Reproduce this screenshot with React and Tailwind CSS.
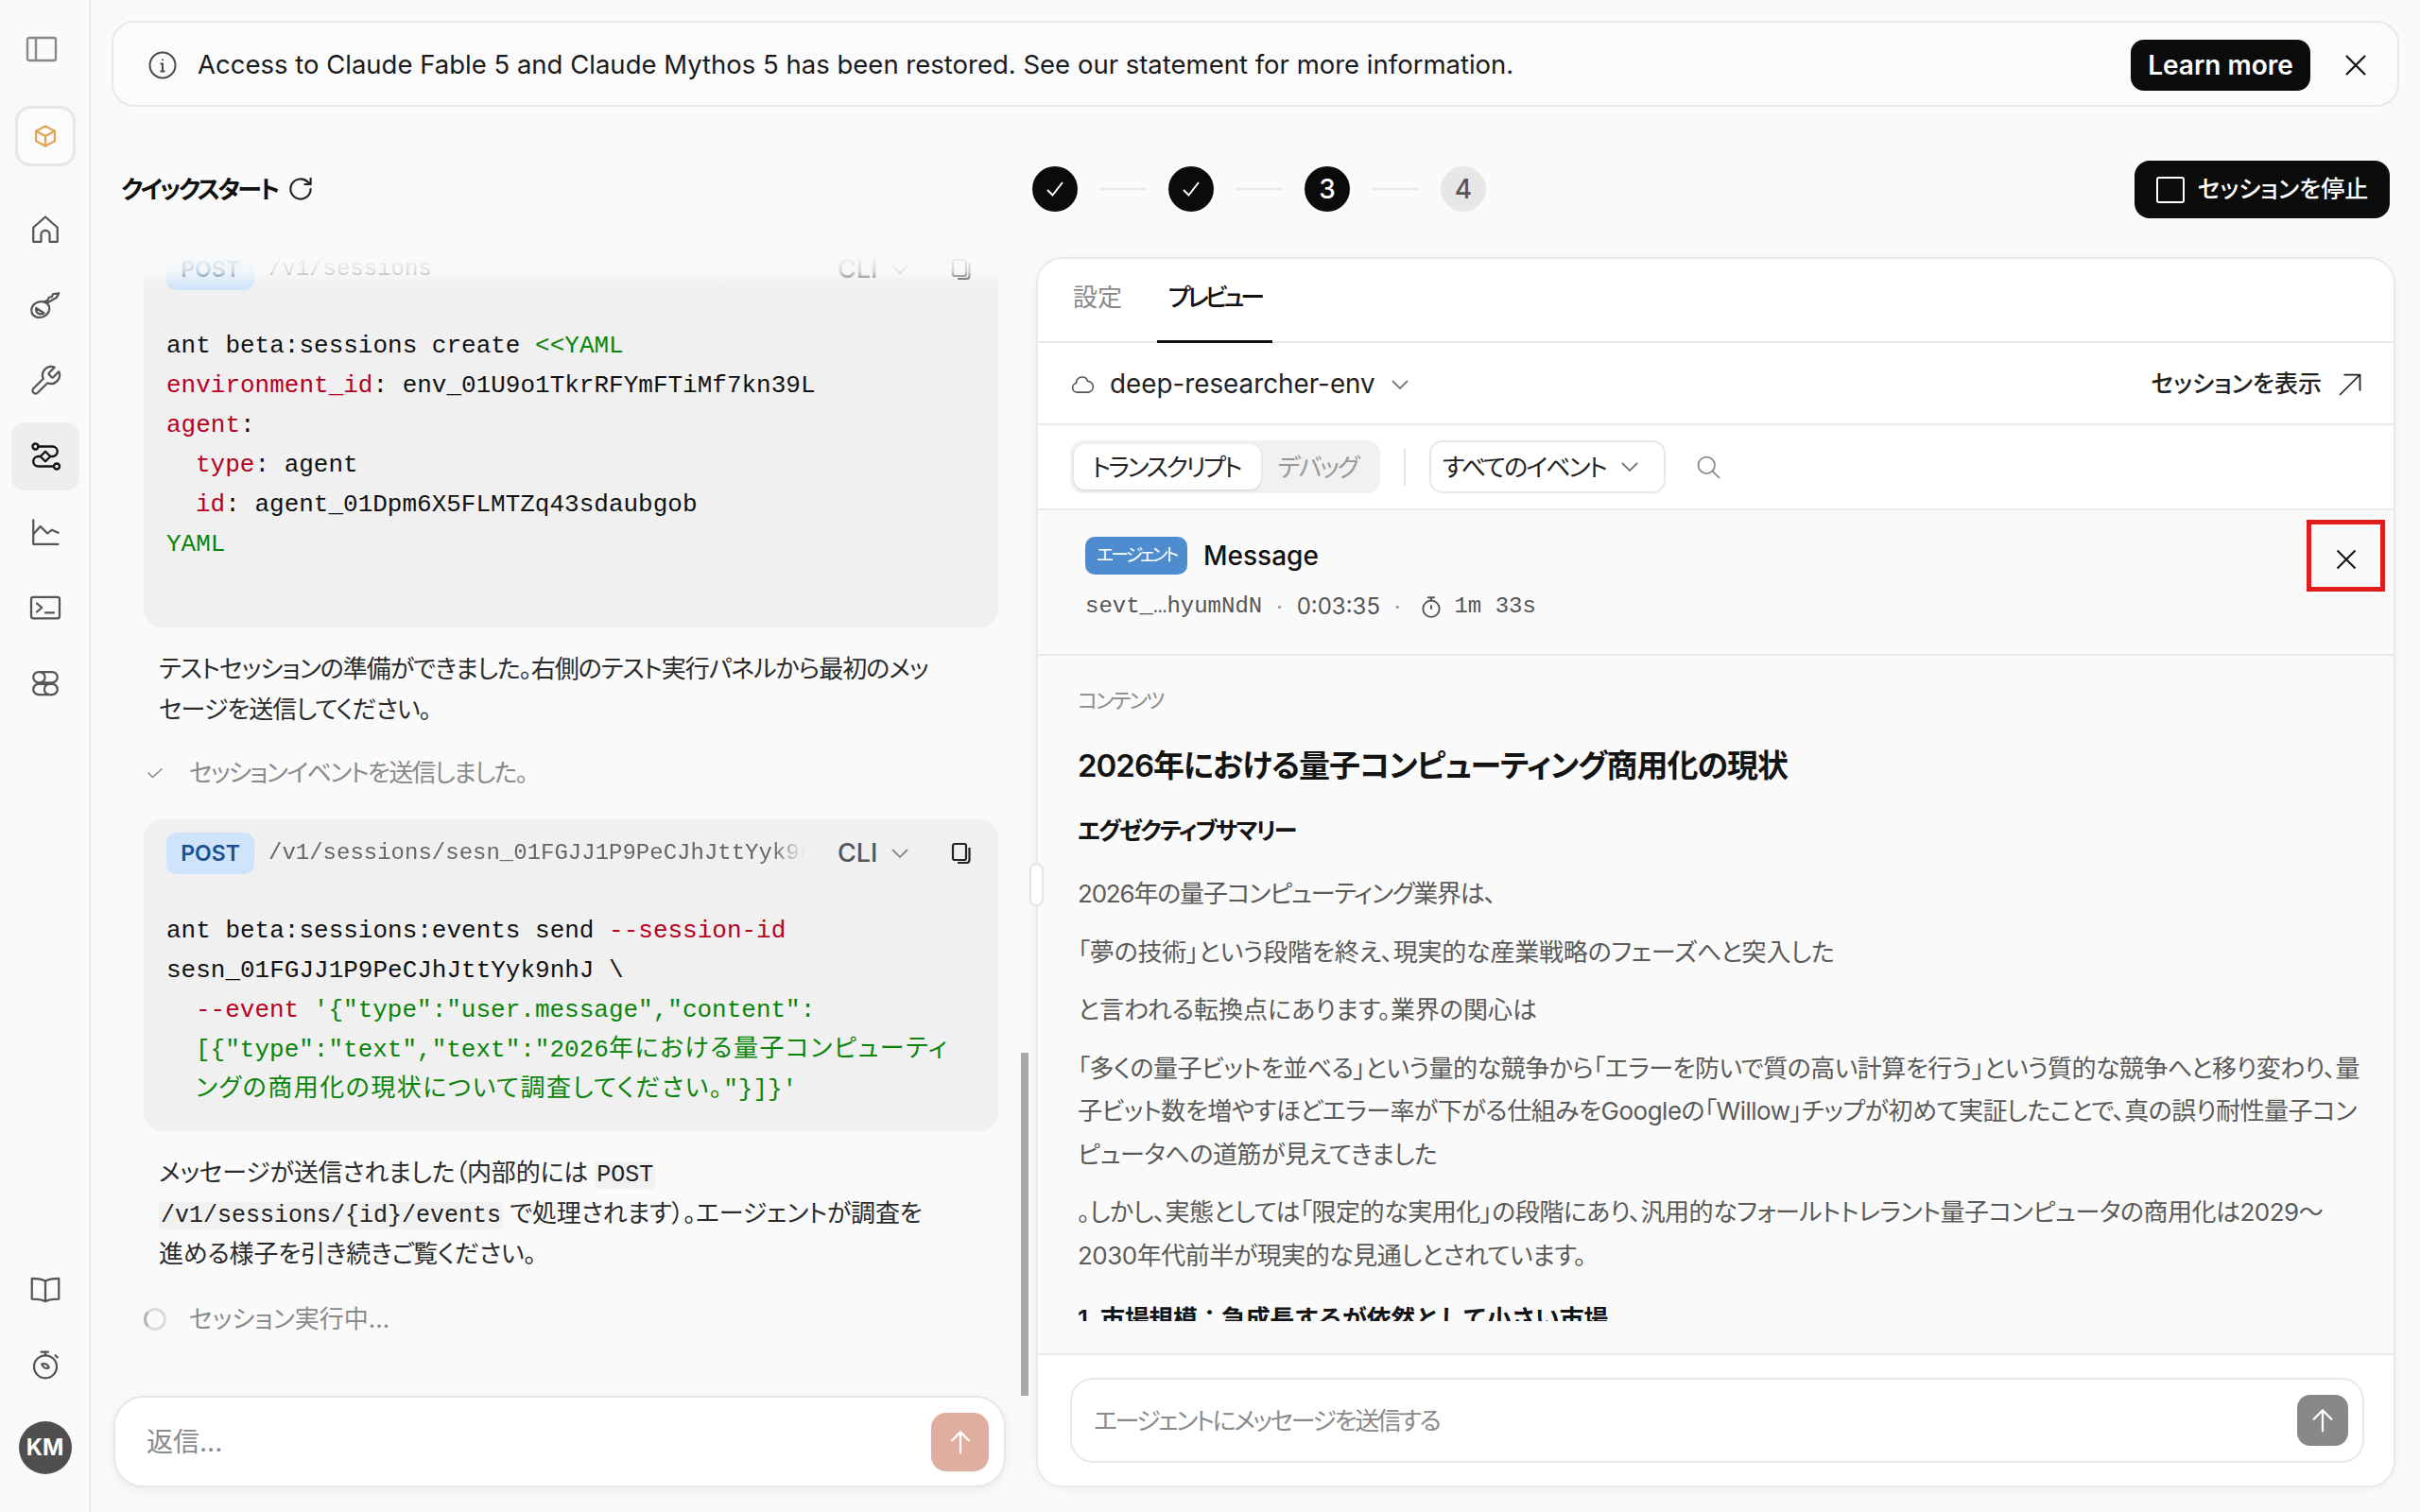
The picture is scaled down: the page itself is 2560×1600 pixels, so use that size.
import React from "react";

const sans = "font-['Inter','Noto_Sans_CJK_JP',sans-serif] [font-feature-settings:'palt']";
const mono = "font-['Liberation_Mono','Noto_Sans_CJK_JP',monospace] [font-feature-settings:'palt']";

const Svg = ({ size = 36, w = 1.5, vb = "0 0 24 24", className = "", children }) => (
  <svg width={size} height={size} viewBox={vb} fill="none" stroke="currentColor" strokeWidth={w} strokeLinecap="round" strokeLinejoin="round" className={className}>
    {children}
  </svg>
);

const NavItem = ({ active, children }) => (
  <div className={`flex h-[72px] w-[72px] items-center justify-center rounded-[14px] ${active ? "bg-[#eeeeee] text-[#141414]" : "text-[#555555]"}`}>{children}</div>
);

const Sidebar = () => (
  <aside className="flex h-full w-[96px] shrink-0 flex-col items-center border-r-2 border-[#e9e9e9] bg-[#fafafa] pb-[40px] pl-[1px] pt-[38px]">
    <svg width="34" height="28" viewBox="0 0 34 28" fill="none" stroke="#8a8a8a" strokeWidth="2.4" strokeLinejoin="round" className="mr-[7px]">
      <rect x="2" y="2" width="30" height="24" rx="2" />
      <path d="M11 2v24" />
    </svg>
    <div className="mb-[31px] mt-[46px] flex h-[64px] w-[64px] items-center justify-center rounded-[16px] border-[3px] border-[#e6e6e6] bg-[#fbfbfb] text-[#dfa455]">
      <Svg size={28} w={1.9}>
        <path d="M12 3l8.500 4.500v9L12 21l-8.500-4.500v-9z" />
        <path d="M3.500 7.500L12 12l8.500-4.500M12 12v9" />
      </Svg>
    </div>
    <div className="flex flex-col gap-2">
      <NavItem>
        <Svg><path d="M3.500 20.500V10.500L12 3l8.500 7.500v10h-5.500v-5a3 3 0 0 0-6 0v5z" /></Svg>
      </NavItem>
      <NavItem>
        <Svg>
          <path d="M13 10.500L20 6.500l1.500-3-4 .5-1 2-2 .5-1 2-2.500 1.200" />
          <ellipse cx="8.500" cy="15" rx="6.500" ry="5.500" transform="rotate(-20 8.500 15)" />
          <path d="M5.500 14l5.500 3.500c-2 1.500-6.200.800-5.500-3.500z" />
        </Svg>
      </NavItem>
      <NavItem>
        <Svg><path d="M14.700 6.300a1 1 0 0 0 0 1.400l1.600 1.600a1 1 0 0 0 1.400 0l3.770-3.770a6 6 0 0 1-7.940 7.940l-6.910 6.910a2.120 2.120 0 0 1-3-3l6.910-6.910a6 6 0 0 1 7.940-7.940l-3.760 3.760z" /></Svg>
      </NavItem>
      <NavItem active>
        <Svg w={1.600}>
          <circle cx="5" cy="5" r="2" />
          <circle cx="20" cy="19" r="2" />
          <path d="M7 5h10a3.500 3.500 0 0 1 0 7h-1M18 19H7a3.500 3.500 0 0 1 0-7h1" />
          <path d="M12 8.500l3.500 3.500-3.500 3.500L8.500 12z" />
        </Svg>
      </NavItem>
      <NavItem>
        <Svg><path d="M3.500 3.500v17h17.500" /><path d="M4 13l4.500-5 5 5 3-2.500 4.500 2" /></Svg>
      </NavItem>
      <NavItem>
        <Svg><rect x="2" y="4.500" width="20" height="15" rx="1.500" /><path d="M6 9l3.500 3L6 15M12 15.500h6" /></Svg>
      </NavItem>
      <NavItem>
        <Svg>
          <rect x="3.500" y="4" width="17" height="7.500" rx="3.750" />
          <rect x="3.500" y="12.500" width="17" height="7.500" rx="3.750" />
          <path d="M9 4.200a3.700 3.700 0 0 1 0 7.100M14 12.700a3.700 3.700 0 0 0 0 7.100" />
        </Svg>
      </NavItem>
    </div>
    <div className="flex-1" />
    <div className="flex flex-col gap-2">
      <NavItem>
        <Svg><path d="M12 6.500C10 5 7 4.500 2.500 4.500v14.500c4.500 0 7.500.300 9.500 1.800 2-1.500 5-1.800 9.500-1.800V4.500C17 4.500 14 5 12 6.500zM12 6.500v14.300" /></Svg>
      </NavItem>
      <NavItem>
        <Svg>
          <circle cx="12" cy="13.500" r="8" />
          <path d="M9 3h5M12 3v2.500M19 5.500l1.500 1.500" />
          <path d="M9.500 11.500c2.500-.500 4.500.500 5 2.500-2 1.500-4.500 0-5-2.500z" />
        </Svg>
      </NavItem>
    </div>
    <div className={`mt-[24px] flex h-[56px] w-[56px] items-center justify-center rounded-full bg-[#4f4f4f] text-[24px] font-bold text-white ${sans}`}>KM</div>
  </aside>
);

const Banner = () => (
  <div className="mx-[22px] mt-[22px] flex h-[91px] shrink-0 items-center rounded-[24px] border-2 border-[#e8e8e8] bg-[#fbfbfb] pl-[37px] pr-[20px] pt-[2px]">
    <svg width="30" height="30" viewBox="0 0 30 30" fill="none" stroke="#4a4a4a" strokeWidth="2" className="shrink-0">
      <circle cx="15" cy="15" r="13.500" />
      <path d="M15 8.500v1.500M12.500 13.500H15v8M12.500 21.500h5" />
    </svg>
    <span className={`ml-[22px] text-[27.500px] text-[#1a1a1a] ${sans}`}>Access to Claude Fable 5 and Claude Mythos 5 has been restored. See our statement for more information.</span>
    <div className="flex-1" />
    <button className={`flex h-[54px] w-[190px] items-center justify-center rounded-[14px] bg-[#0c0c0c] text-[28px] font-semibold text-white ${sans}`}>Learn more</button>
    <div className="ml-[36px] mr-[12px] text-[#111111]">
      <svg width="24" height="24" viewBox="0 0 24 24" fill="none" stroke="currentColor" strokeWidth="2.2"><path d="M2 2l20 20M22 2L2 22" /></svg>
    </div>
  </div>
);

const Red = ({ children }) => <span className="text-[#b8001f]">{children}</span>;
const Green = ({ children }) => <span className="text-[#0a850a]">{children}</span>;
const Wide = ({ children }) => <span className="tracking-[1.500px]">{children}</span>;

const CodeHead = ({ path }) => (
  <div className="flex h-[44px] items-center">
    <span className={`flex h-[44px] w-[93px] items-center justify-center rounded-[10px] bg-[#cfe3fa] text-[23px] font-semibold text-[#1a508f] ${sans}`}>POST</span>
    <span className={`ml-[15px] w-[567px] overflow-hidden whitespace-nowrap text-[24px] text-[#666666] [mask-image:linear-gradient(to_right,black_94%,transparent)] ${mono}`}>{path}</span>
    <span className={`ml-[35px] text-[27px] font-medium text-[#555555] ${sans}`}>CLI</span>
    <svg width="20" height="12" viewBox="0 0 20 12" fill="none" stroke="#8a8a8a" strokeWidth="1.8" className="ml-[14px]"><path d="M2 2l8 8 8-8" /></svg>
    <svg width="22" height="24" viewBox="0 0 22 24" fill="none" stroke="#222222" strokeWidth="2.200" className="ml-[44px]">
      <rect x="2" y="2" width="14" height="17" rx="2" />
      <path d="M19.500 6v13a3 3 0 0 1-3 3H7" />
    </svg>
  </div>
);

const CodeLine = ({ indent, children }) => (
  <div className={`h-[42px] whitespace-nowrap leading-[42px] ${indent ? "pl-[31px]" : ""}`}>{children}</div>
);

const InlineCode = ({ children }) => <code className={`rounded-[4px] bg-[#f1f1f1] px-[2px] text-[25px] leading-none tracking-normal text-[#222222] ${mono}`}>{children}</code>;

const LeftColumn = () => (
  <div className="flex h-full w-[996px] shrink-0 flex-col">
    <div className="flex h-[156px] shrink-0 items-start pl-[32px] pt-[72px]">
      <span className={`text-[26px] font-semibold leading-[32px] tracking-[-2.600px] text-[#111111] ${sans}`}>クイックスタート</span>
      <Svg size={30} w={1.700} className="ml-[10px] text-[#222222]"><path d="M20.500 12a8.500 8.500 0 1 1-2.600-6.100L20.500 8M20.500 3v5h-5" /></Svg>
    </div>
    <div className="relative flex min-h-0 flex-1 flex-col justify-end overflow-hidden pb-[62px] pl-[56px] pr-[36px]">
      <div className="pointer-events-none absolute inset-x-0 top-0 z-10 h-[36px] bg-gradient-to-b from-[#fafafa] via-[#fafafa]/80 to-[#fafafa]/0" />
      <div className="rounded-[20px] bg-[#f0f0f0] px-[24px] pb-[67px] pt-[14px]">
        <CodeHead path="/v1/sessions" />
        <div className={`mt-[38px] text-[26px] text-[#111111] ${mono}`}>
          <CodeLine>ant beta:sessions create <Green>&lt;&lt;YAML</Green></CodeLine>
          <CodeLine><Red>environment_id</Red>: env_01U9o1TkrRFYmFTiMf7kn39L</CodeLine>
          <CodeLine><Red>agent</Red>:</CodeLine>
          <CodeLine indent><Red>type</Red>: agent</CodeLine>
          <CodeLine indent><Red>id</Red>: agent_01Dpm6X5FLMTZq43sdaubgob</CodeLine>
          <CodeLine><Green>YAML</Green></CodeLine>
        </div>
      </div>
      <p className={`mt-[22px] max-w-[840px] pl-[16px] text-[26px] leading-[43px] tracking-[-1px] text-[#2b2b2b] ${sans}`}>
        テストセッションの準備ができました。右側のテスト実行パネルから最初のメッセージを送信してください。
      </p>
      <div className="mt-[26px] flex h-[42px] items-center text-[#8a8a8a]">
        <svg width="18" height="12" viewBox="0 0 18 12" fill="none" stroke="#8a8a8a" strokeWidth="1.6" className="ml-[3px]"><path d="M1.500 5.500l5 5L16.500 1.500" /></svg>
        <span className={`ml-[27px] text-[26px] tracking-[-1.700px] ${sans}`}>セッションイベントを送信しました。</span>
      </div>
      <div className="mt-[30px] rounded-[20px] bg-[#f0f0f0] px-[24px] pb-[23px] pt-[14px]">
        <CodeHead path="/v1/sessions/sesn_01FGJJ1P9PeCJhJttYyk9nhJ" />
        <div className={`mt-[39px] text-[26px] text-[#111111] ${mono}`}>
          <CodeLine>ant beta:sessions:events send <Red>--session-id</Red></CodeLine>
          <CodeLine>sesn_01FGJJ1P9PeCJhJttYyk9nhJ \</CodeLine>
          <CodeLine indent><Red>--event</Red> <Green>'{"{"}"type":"user.message","content":</Green></CodeLine>
          <CodeLine indent><Green>[{"{"}"type":"text","text":"2026<Wide>年における量子コンピューティ</Wide></Green></CodeLine>
          <CodeLine indent><Green><Wide>ングの商用化の現状について調査してください。</Wide>"{"}"}]{"}"}'</Green></CodeLine>
        </div>
      </div>
      <p className={`mt-[22px] max-w-[840px] pl-[16px] text-[26px] leading-[43px] tracking-[-0.200px] text-[#2b2b2b] ${sans}`}>
        メッセージが送信されました（内部的には <InlineCode>POST</InlineCode> <InlineCode>/v1/sessions/{"{id}"}/events</InlineCode> で処理されます）。エージェントが調査を進める様子を引き続きご覧ください。
      </p>
      <div className="mt-[28px] flex h-[42px] items-center text-[#8a8a8a]">
        <span className="block h-[24px] w-[24px] rounded-full border-[3px] border-[#dcdcdc] border-l-[#b5b5b5]" />
        <span className={`ml-[24px] text-[26px] ${sans}`}>セッション実行中...</span>
      </div>
      <div className="absolute bottom-0 left-[984px] h-[363px] w-[8px] bg-[#a9a9a9]" />
    </div>
    <div className="mb-[26px] ml-[24px] flex h-[97px] w-[944px] shrink-0 items-center rounded-[32px] border-2 border-[#e8e8e8] bg-white pl-[33px] pr-[16px] shadow-[0_4px_12px_rgba(0,0,0,0.06)]">
      <span className={`flex-1 text-[28px] text-[#8a8a8a] ${sans}`}>返信...</span>
      <div className="flex h-[62px] w-[61px] items-center justify-center rounded-[16px] bg-[#e0ae9e] text-white">
        <Svg size={30} w={1.800}><path d="M12 21V3.500M5 10.500l7-7 7 7" /></Svg>
      </div>
    </div>
  </div>
);

const Step = ({ done, n, idle }) => (
  <span className={`flex h-[48px] w-[48px] items-center justify-center rounded-full text-[28px] font-medium ${sans} ${idle ? "bg-[#e7e7e7] text-[#555555]" : "bg-[#0b0b0b] text-white"}`}>
    {done ? (
      <svg width="22" height="22" viewBox="0 0 22 22" fill="none" stroke="white" strokeWidth="2"><path d="M3 12l5.500 5.500L19 4" /></svg>
    ) : n}
  </span>
);

const StepLine = () => <span className="mx-[24px] h-[2px] w-[48px] bg-[#e8e8e8]" />;

const Chevron = ({ cls }) => (
  <svg width="20" height="12" viewBox="0 0 20 12" fill="none" stroke="currentColor" strokeWidth="1.800" className={cls}><path d="M2 2l8 8 8-8" /></svg>
);

const Preview = () => (
  <div className="relative mb-[26px] ml-[4px] flex min-h-0 flex-1 flex-col rounded-[28px] border-2 border-[#e9e9e9] bg-white shadow-[0_2px_14px_rgba(0,0,0,0.04)]">
    <div className="absolute left-[-9px] top-[639px] z-10 h-[46px] w-[15px] rounded-full border-2 border-[#e4e4e4] bg-white" />
    <div className="flex h-[89px] shrink-0 items-end border-b-2 border-[#e9e9e9] pl-[37px]">
      <span className={`mb-[-2px] flex h-[89px] items-center pb-[9px] pr-[37px] text-[26px] text-[#8a8a8a] ${sans}`}>設定</span>
      <span className={`mb-[-2px] flex h-[89px] w-[122px] items-center justify-center border-b-[3px] border-[#111111] pb-[6px] text-[26px] font-medium tracking-[-4px] text-[#111111] ${sans}`}>プレビュー</span>
    </div>
    <div className="flex h-[87px] shrink-0 items-center border-b-2 border-[#e9e9e9] pl-[34px] pr-[32px] pt-[3px]">
      <Svg size={26} w={1.500} className="text-[#555555]"><path d="M7 19.500a4.500 4.500 0 0 1-1-8.900 5.500 5.500 0 0 1 6-6 5 5 0 0 1 5 4 5.500 5.500 0 0 1 1 10.900z" /></Svg>
      <span className={`ml-[16px] text-[27.800px] text-[#222222] ${sans}`}>deep-researcher-env</span>
      <Chevron cls="ml-[16px] text-[#777777]" />
      <div className="flex-1" />
      <span className={`text-[25px] font-medium text-[#222222] ${sans}`}>セッションを表示</span>
      <Svg size={28} w={1.500} className="ml-[16px] text-[#222222]"><path d="M3 21L21 3M7 3h14v14" /></Svg>
    </div>
    <div className="flex h-[90px] shrink-0 items-center border-b-2 border-[#e9e9e9] pl-[34px]">
      <div className="flex h-[56px] w-[328px] items-center rounded-[14px] bg-[#f1f1f1] pl-[4px] pr-[6px]">
        <span className={`flex h-[48px] w-[198px] items-center justify-center rounded-[12px] bg-white pr-[3px] text-[26px] tracking-[-2.500px] text-[#222222] shadow-[0_1px_3px_rgba(0,0,0,0.15)] ${sans}`}>トランスクリプト</span>
        <span className={`flex-1 text-center text-[26px] tracking-[-2px] text-[#999999] ${sans}`}>デバッグ</span>
      </div>
      <span className="ml-[25px] h-[40px] w-[2px] bg-[#e5e5e5]" />
      <div className="ml-[25px] flex h-[56px] w-[250px] items-center rounded-[14px] border-2 border-[#e8e8e8] bg-white pl-[12px]">
        <span className={`whitespace-nowrap text-[26px] tracking-[-2px] text-[#222222] ${sans}`}>すべてのイベント</span>
        <Chevron cls="ml-[15px] text-[#777777]" />
      </div>
      <Svg size={28} w={1.500} className="ml-[31px] text-[#8a8a8a]"><circle cx="10.500" cy="10.500" r="7.500" /><path d="M16 16l6 6" /></Svg>
    </div>
    <div className="relative h-[154px] shrink-0 border-b-2 border-[#e9e9e9] bg-[#fafafa] pl-[50px] pt-[28px]">
      <div className="flex h-[40px] items-center">
        <span className={`flex h-[40px] w-[108px] items-center justify-center rounded-[10px] bg-[#4f8bcf] text-[19px] tracking-[-3px] text-white ${sans}`}>エージェント</span>
        <span className={`ml-[17px] text-[28px] font-medium text-[#111111] ${sans}`}>Message</span>
      </div>
      <div className="mt-[18px] flex h-[32px] items-center text-[24px] text-[#555555]">
        <span className={mono}>sevt_…hyumNdN</span>
        <span className="mx-[15px] text-[#999999]">·</span>
        <span className={sans}>0:03:35</span>
        <span className="ml-[15px] mr-[20px] text-[#999999]">·</span>
        <Svg size={26} w={1.700} className="text-[#555555]"><circle cx="12" cy="14" r="8" /><path d="M9 3h6M12 3v3M12 11v3" /></Svg>
        <span className={`ml-[11px] ${mono}`}>1m 33s</span>
      </div>
      <div className="absolute right-[9px] top-[10px] flex h-[76px] w-[83px] items-center justify-center border-[5px] border-[#e11d1d] pt-[8px] text-[#111111]">
        <svg width="22" height="22" viewBox="0 0 22 22" fill="none" stroke="currentColor" strokeWidth="2"><path d="M1.500 1.500l19 19M20.500 1.500l-19 19" /></svg>
      </div>
    </div>
    <div className="min-h-0 flex-1 bg-[#fafafa] pb-[34px]">
      <div className={`h-full overflow-hidden pl-[42px] pr-[32px] pt-[31px] ${sans}`}>
        <div className="text-[22px] leading-[32px] tracking-[-2px] text-[#8a8a8a]">コンテンツ</div>
        <h1 className="mt-[27px] text-[33px] font-semibold leading-[52px] tracking-[-1px] text-[#141414]">2026年における量子コンピューティング商用化の現状</h1>
        <h2 className="mt-[23px] text-[25px] font-semibold leading-[40px] tracking-[-2px] text-[#141414]">エグゼクティブサマリー</h2>
        <div className="mt-[24px] flex flex-col gap-[16px] text-[26px] leading-[45.500px] text-[#5a5a58]">
          <p className="tracking-[-1.200px]">2026年の量子コンピューティング業界は、</p>
          <p className="tracking-[-0.200px]">「夢の技術」という段階を終え、現実的な産業戦略のフェーズへと突入した</p>
          <p>と言われる転換点にあります。業界の関心は</p>
          <p className="tracking-[-0.500px]">「多くの量子ビットを並べる」という量的な競争から「エラーを防いで質の高い計算を行う」という質的な競争へと移り変わり、量子ビット数を増やすほどエラー率が下がる仕組みをGoogleの「Willow」チップが初めて実証したことで、真の誤り耐性量子コンピュータへの道筋が見えてきました</p>
          <p className="tracking-[-0.500px]">。しかし、実態としては「限定的な実用化」の段階にあり、汎用的なフォールトトレラント量子コンピュータの商用化は2029〜2030年代前半が現実的な見通しとされています。</p>
        </div>
        <h3 className="mt-[22px] text-[26px] font-semibold leading-[46px] tracking-[-0.400px] [font-feature-settings:normal] text-[#141414]">1. 市場規模：急成長するが依然として小さい市場</h3>
      </div>
    </div>
    <div className="flex h-[140px] shrink-0 items-center rounded-b-[26px] border-t-2 border-[#e9e9e9] bg-white pl-[34px] pr-[31px]">
      <div className="flex h-[90px] flex-1 items-center rounded-[24px] border-2 border-[#e9e9e9] bg-white pl-[23px] pr-[15px]">
        <span className={`flex-1 text-[26px] tracking-[-2.400px] text-[#8a8a8a] ${sans}`}>エージェントにメッセージを送信する</span>
        <div className="flex h-[54px] w-[54px] items-center justify-center rounded-[14px] bg-[#888888] text-white">
          <Svg size={30} w={1.800}><path d="M12 21V3.500M4.500 11l7.500-7.500 7.500 7.500" /></Svg>
        </div>
      </div>
    </div>
  </div>
);

const RightColumn = () => (
  <div className="flex h-full min-w-0 flex-1 flex-col pr-[26px]">
    <div className="flex h-[159px] shrink-0 items-start justify-between pr-[6px] pt-[57px]">
      <div className="mt-[6px] flex items-center">
        <Step done />
        <StepLine />
        <Step done />
        <StepLine />
        <Step n="3" />
        <StepLine />
        <Step n="4" idle />
      </div>
      <button className={`flex h-[61px] w-[270px] items-center justify-center rounded-[16px] bg-[#0c0c0c] text-[25px] font-medium text-white ${sans}`}>
        <span className="mr-[14px] block h-[28px] w-[30px] rounded-[3px] border-2 border-white" />
        セッションを停止
      </button>
    </div>
    <Preview />
  </div>
);

export default function App() {
  return (
    <div className="flex h-screen w-full overflow-hidden bg-[#fafafa]">
      <Sidebar />
      <main className="flex min-w-0 flex-1 flex-col">
        <Banner />
        <div className="flex min-h-0 flex-1">
          <LeftColumn />
          <RightColumn />
        </div>
      </main>
    </div>
  );
}
